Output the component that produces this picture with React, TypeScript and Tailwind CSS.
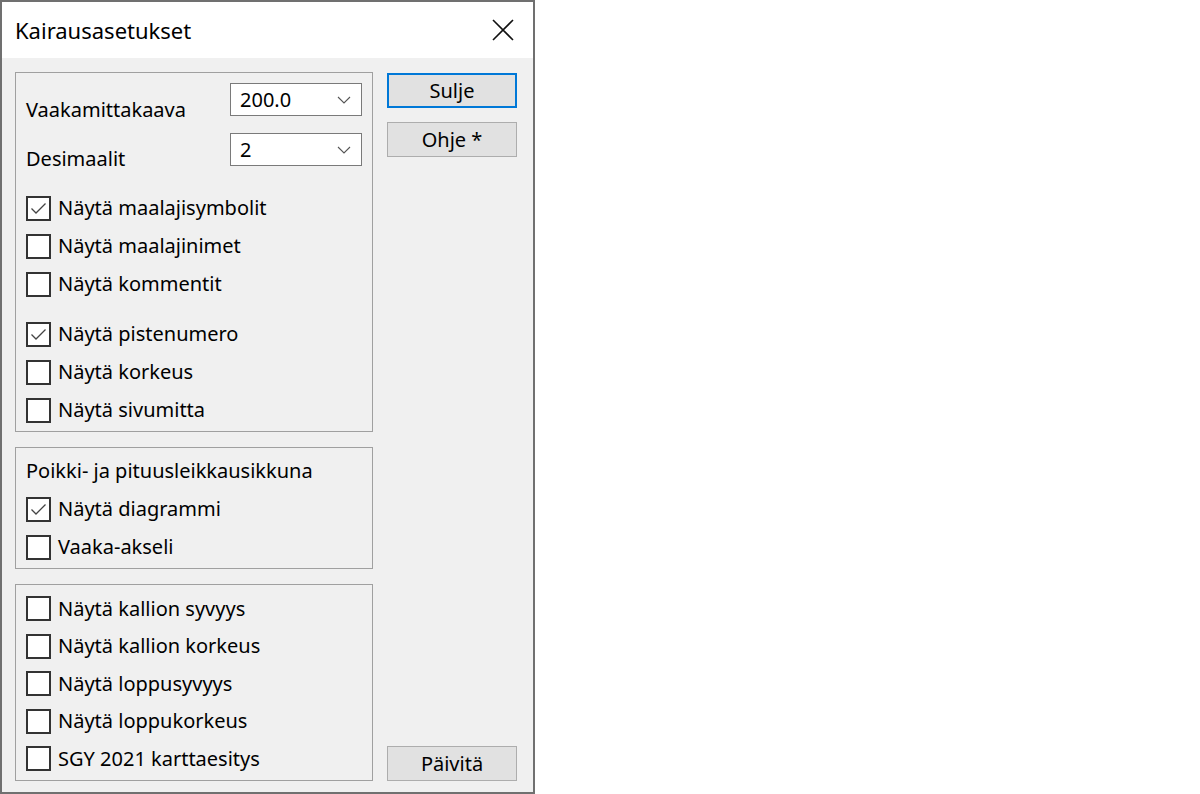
import React from "react";

const font = { fontFamily: '"Noto Sans", "Open Sans", Arial, sans-serif' };

function Check({ label, checked = false }: { label: string; checked?: boolean }) {
  return (
    <div className="flex h-[38px] items-center">
      <div className="ml-[10px] flex h-[25px] w-[25px] items-center justify-center border-2 border-[#333333] bg-white">
        {checked && (
          <svg width="17" height="13" viewBox="0 0 17 13">
            <path d="M1.5 6.5 L6 11 L15.5 1.5" fill="none" stroke="#444" strokeWidth="1.3" />
          </svg>
        )}
      </div>
      <span className="ml-[7px] text-[20px] leading-[24px] text-black">{label}</span>
    </div>
  );
}

function Combo({ value }: { value: string }) {
  return (
    <div className="flex h-[33px] w-[132px] items-center justify-between border border-[#7a7a7a] bg-white pl-[9px] pr-[10px]">
      <span className="text-[20px] leading-[24px] text-black">{value}</span>
      <svg width="14" height="8" viewBox="0 0 14 8">
        <path d="M1 1 L7 7 L13 1" fill="none" stroke="#555" strokeWidth="1.1" />
      </svg>
    </div>
  );
}

function Button({ label, focused = false }: { label: string; focused?: boolean }) {
  return (
    <div
      className={
        "flex h-[35px] w-[130px] items-center justify-center bg-[#e1e1e1] text-[20px] leading-[24px] text-black " +
        (focused ? "border-2 border-[#0078d7]" : "border border-[#adadad]")
      }
    >
      {label}
    </div>
  );
}

export default function App() {
  return (
    <div className="h-[794px] w-[1200px] bg-white" style={font}>
      <div className="flex h-[794px] w-[535px] flex-col border-2 border-[#707070]">
        <div className="flex h-[56px] items-center justify-between bg-white pl-[13px] pr-[19px]">
          <span className="text-[22px] leading-[26px] text-black">Kairausasetukset</span>
          <svg width="22" height="22" viewBox="0 0 22 22">
            <path d="M1 1 L21 21 M21 1 L1 21" stroke="#111" strokeWidth="1.6" />
          </svg>
        </div>
        <div className="flex flex-1 bg-[#f0f0f0] pl-[13px] pt-[14px] pb-[11px]">
          <div className="flex w-[358px] flex-col gap-[15px]">
            <div className="h-[360px] border border-[#a0a0a0] pt-[10px]">
              <div className="flex h-[33px] justify-between pr-[10px]">
                <span className="ml-[10px] mt-[15px] text-[20px] leading-[24px]">Vaakamittakaava</span>
                <Combo value="200.0" />
              </div>
              <div className="mt-[17px] flex h-[33px] justify-between pr-[10px]">
                <span className="ml-[10px] mt-[14px] text-[20px] leading-[24px]">Desimaalit</span>
                <Combo value="2" />
              </div>
              <div className="mt-[23px]">
                <Check label="Näytä maalajisymbolit" checked />
                <Check label="Näytä maalajinimet" />
                <Check label="Näytä kommentit" />
              </div>
              <div className="mt-[12px]">
                <Check label="Näytä pistenumero" checked />
                <Check label="Näytä korkeus" />
                <Check label="Näytä sivumitta" />
              </div>
            </div>
            <div className="h-[122px] border border-[#a0a0a0] pt-[4px]">
              <div className="flex h-[38px] items-center pl-[10px] text-[20px] leading-[24px]">
                Poikki- ja pituusleikkausikkuna
              </div>
              <Check label="Näytä diagrammi" checked />
              <Check label="Vaaka-akseli" />
            </div>
            <div className="flex-1 border border-[#a0a0a0] pt-[5px] [&>div]:h-[37.5px]">
              <Check label="Näytä kallion syvyys" />
              <Check label="Näytä kallion korkeus" />
              <Check label="Näytä loppusyvyys" />
              <Check label="Näytä loppukorkeus" />
              <Check label="SGY 2021 karttaesitys" />
            </div>
          </div>
          <div className="ml-[14px] flex flex-col pt-[1px]">
            <Button label="Sulje" focused />
            <div className="mt-[14px]">
              <Button label="Ohje *" />
            </div>
            <div className="mt-auto">
              <Button label="Päivitä" />
            </div>
          </div>
        </div>
      </div>
    </div>
  );
}
